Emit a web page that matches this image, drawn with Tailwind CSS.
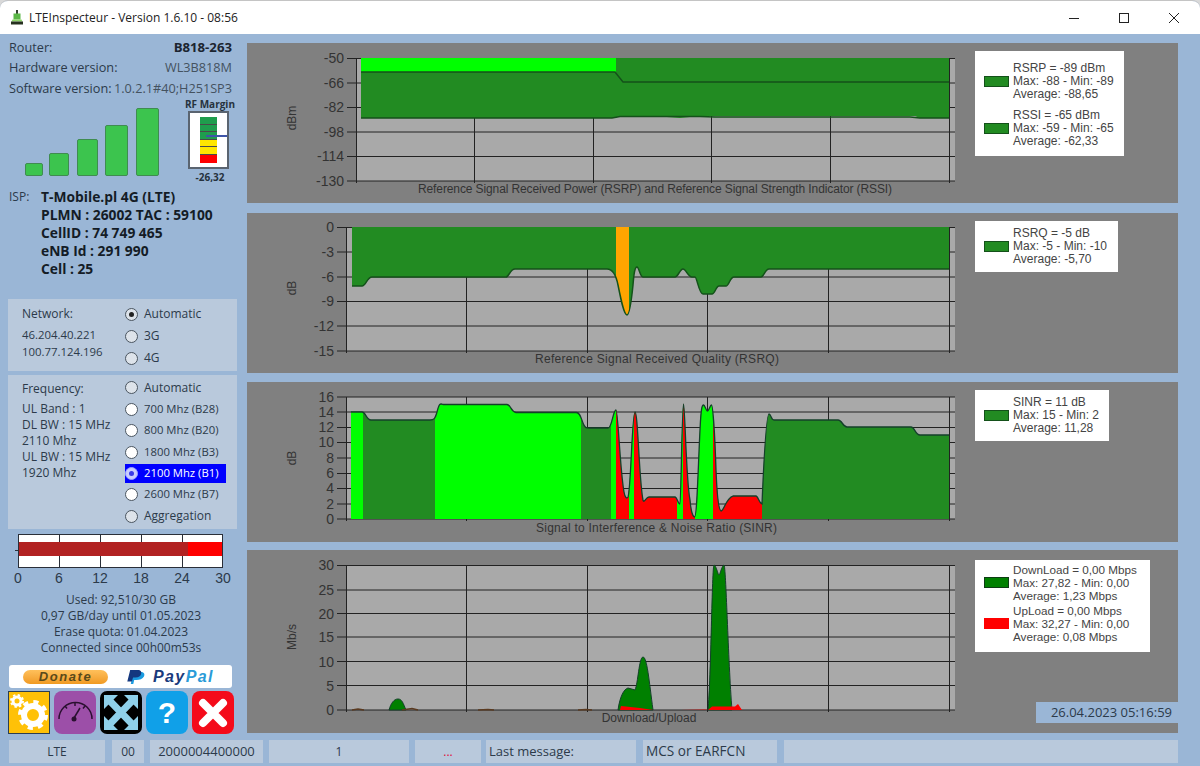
<!DOCTYPE html>
<html lang="en">
<head>
    <meta charset="UTF-8">
    <title>LTEInspecteur</title>
    <script src="https://cdn.jsdelivr.net/npm/@tailwindcss/browser@4"></script>
</head>
<body class="bg-[#d9d9d9] overflow-hidden font-['Open_Sans',sans-serif]">
<div class="w-[1200px] h-[766px] flex flex-col bg-[#9ab6d6] rounded-t-lg overflow-hidden border-t border-[#c4c4c4] text-[#2c3a4a]">

    <!-- Title bar -->
    <div class="h-[33px] shrink-0 bg-white flex items-center text-[12px] text-[#222]">
        <svg class="ml-[10px] w-[14px] h-[15px]" viewBox="0 0 14 15">
            <rect x="6" y="0" width="2" height="5" fill="#33402f"/>
            <path d="M3.500 3.500h7v6h-7z" fill="#5cb848"/>
            <path d="M2.500 9.500h9l1 2h-11z" fill="#8fd46a"/>
            <rect x="1" y="11.500" width="12" height="3" fill="#26301f"/>
        </svg>
        <span class="ml-[5px]">LTEInspecteur - Version 1.6.10 - 08:56</span>
        <div class="ml-auto flex items-center">
            <svg class="w-[50px] h-[20px]" viewBox="0 0 50 20"><path d="M20 10.500h10" stroke="#222"/></svg>
            <svg class="w-[50px] h-[20px]" viewBox="0 0 50 20"><rect x="20.500" y="5.500" width="9" height="9" fill="none" stroke="#222" stroke-width="1"/></svg>
            <svg class="w-[50px] h-[20px]" viewBox="0 0 50 20"><path d="M20 5l10 10M30 5l-10 10" stroke="#222"/></svg>
            <div class="w-[1px]"></div>
        </div>
    </div>

    <div class="flex flex-1 min-h-0">
        <!-- Left column -->
        <div class="w-[247px] shrink-0 flex flex-col text-[12px]">
            <div class="pt-[3px] pl-[9px] pr-[15px] text-[12.7px] whitespace-nowrap">
                <div class="flex justify-between h-[20px] leading-[20px]"><span>Router:</span><span class="font-bold text-[13.2px] text-[#1c2530]">B818-263</span></div>
                <div class="flex justify-between h-[21px] leading-[20px]"><span>Hardware version:</span><span class="text-[#44525f]">WL3B818M</span></div>
                <div class="flex justify-between h-[20px] leading-[20px]"><span>Software version:</span><span class="text-[#44525f]">1.0.2.1#40;H251SP3</span></div>
            </div>
            <!-- Signal + RF margin -->
            <div class="h-[89px] flex items-start">
                <div class="h-[78px] flex items-end ml-[25px] w-[134px] shrink-0">
                    <div class="w-[18px] h-[13px] bg-[#3cc44e] border border-[#3f8c50] rounded-[2px]"></div>
                    <div class="w-[20px] h-[23px] ml-[6px] bg-[#3cc44e] border border-[#3f8c50] rounded-[2px]"></div>
                    <div class="w-[21px] h-[37px] ml-[8px] bg-[#3cc44e] border border-[#3f8c50] rounded-[2px]"></div>
                    <div class="w-[23px] h-[51px] ml-[7px] bg-[#3cc44e] border border-[#3f8c50] rounded-[2px]"></div>
                    <div class="w-[23px] h-[68px] ml-[8px] bg-[#3cc44e] border border-[#3f8c50] rounded-[2px]"></div>
                </div>
                <div class="ml-[21px] w-[60px] flex flex-col items-center font-bold text-[10px] leading-[12px] text-[#26323e]">
                    <span class="whitespace-nowrap">RF Margin</span>
                    <div class="relative mt-[1px] -ml-[3px] w-[41px] h-[58px] bg-white border-2 border-[#5a6470] pt-[4px] pl-[10px]">
                        <div class="w-[17px] h-[46px] bg-[#4a4a4a] flex flex-col gap-px">
                            <div class="h-[7px] bg-[#1f9d4d]"></div>
                            <div class="h-[6px] bg-[#1f9d4d]"></div>
                            <div class="h-[7px] bg-[#1f9d4d]"></div>
                            <div class="h-[6px] bg-[#ffe600]"></div>
                            <div class="h-[7px] bg-[#ffe600]"></div>
                            <div class="h-[8px] bg-[#ff0000]"></div>
                        </div>
                        <div class="absolute left-[16px] top-[22px] w-[21px] h-[2px] bg-[#3f55a8]"></div>
                    </div>
                    <span class="mt-[2px]">-26,32</span>
                </div>
            </div>
            <!-- ISP -->
            <div class="flex h-[90px] pt-[1px]">
                <span class="pl-[9px] w-[41px] shrink-0 leading-[18px]">ISP:</span>
                <div class="font-bold text-[13.8px] leading-[18px] text-[#141c26] whitespace-nowrap">
                    <div>T-Mobile.pl 4G (LTE)</div>
                    <div>PLMN : 26002 TAC : 59100</div>
                    <div>CellID : 74 749 465</div>
                    <div>eNB Id : 291 990</div>
                    <div>Cell : 25</div>
                </div>
            </div>
            <!-- Network -->
            <div class="mt-[22px] ml-[8px] w-[229px] h-[72px] shrink-0 bg-[#b9c9dc] flex">
                <div class="w-[117px] shrink-0 pl-[14px] pt-[7px]">
                    <div class="h-[16px] leading-[16px]">Network:</div>
                    <div class="mt-[4px] text-[11.4px] leading-[17px]">46.204.40.221<br>100.77.124.196</div>
                </div>
                <div class="pt-[4px]">
                    <div class="h-[22px] flex items-center"><span class="w-[13px] h-[13px] rounded-full border border-[#4a5560] bg-[#dde3ea] flex items-center justify-center"><span class="w-[5px] h-[5px] rounded-full bg-[#222]"></span></span><span class="ml-[6px]">Automatic</span></div>
                    <div class="h-[22px] flex items-center"><span class="w-[13px] h-[13px] rounded-full border border-[#4a5560] bg-[#dde3ea]"></span><span class="ml-[6px]">3G</span></div>
                    <div class="h-[22px] flex items-center"><span class="w-[13px] h-[13px] rounded-full border border-[#4a5560] bg-[#dde3ea]"></span><span class="ml-[6px]">4G</span></div>
                </div>
            </div>
            <!-- Frequency -->
            <div class="mt-[4px] ml-[8px] w-[229px] h-[154px] shrink-0 bg-[#b9c9dc] flex">
                <div class="w-[117px] shrink-0 pl-[14px] pt-[6px]">
                    <div class="h-[16px] leading-[16px]">Frequency:</div>
                    <div class="mt-[4px] leading-[16px] whitespace-nowrap">UL Band : 1<br>DL BW : 15 MHz<br>2110 Mhz<br>UL BW : 15 MHz<br>1920 Mhz</div>
                </div>
                <div class="pt-[2px] whitespace-nowrap">
                    <div class="h-[21px] flex items-center"><span class="w-[13px] h-[13px] rounded-full border border-[#4a5560] bg-[#dde3ea]"></span><span class="ml-[6px]">Automatic</span></div>
                    <div class="h-[22px] flex items-center"><span class="w-[13px] h-[13px] rounded-full border border-[#4a5560] bg-white"></span><span class="ml-[6px] text-[11.3px]">700 Mhz (B28)</span></div>
                    <div class="h-[21px] flex items-center"><span class="w-[13px] h-[13px] rounded-full border border-[#4a5560] bg-white"></span><span class="ml-[6px] text-[11.3px]">800 Mhz (B20)</span></div>
                    <div class="h-[22px] flex items-center"><span class="w-[13px] h-[13px] rounded-full border border-[#4a5560] bg-white"></span><span class="ml-[6px] text-[11.3px]">1800 Mhz (B3)</span></div>
                    <div class="h-[19px] my-[1px] flex items-center bg-[#0000ff] text-white w-[101px]"><span class="w-[13px] h-[13px] rounded-full border border-[#9aa0ff] bg-[#c8ccff] flex items-center justify-center"><span class="w-[5px] h-[5px] rounded-full bg-[#3a3ae8]"></span></span><span class="ml-[6px] text-[11.3px]">2100 Mhz (B1)</span></div>
                    <div class="h-[21px] flex items-center"><span class="w-[13px] h-[13px] rounded-full border border-[#4a5560] bg-white"></span><span class="ml-[6px] text-[11.3px]">2600 Mhz (B7)</span></div>
                    <div class="h-[22px] flex items-center"><span class="w-[13px] h-[13px] rounded-full border border-[#4a5560] bg-[#dde3ea]"></span><span class="ml-[6px]">Aggregation</span></div>
                </div>
            </div>
            <!-- Quota bar -->
            <svg class="mt-[5px] ml-[15px] w-[211px] h-[36px] shrink-0" viewBox="15 533 211 36">
                <rect x="18.500" y="533.500" width="204" height="33" fill="#fff" stroke="#2a2f38"/>
                <rect x="19" y="541" width="169" height="14" fill="#b22222"/>
                <rect x="188" y="541" width="34" height="14" fill="#ff0000"/>
                <path d="M59.500 534v7M100.500 534v7M141.500 534v7M182.500 534v7M59.500 555v12M100.500 555v12M141.500 555v12M182.500 555v12M15 549.500h3" stroke="#2a2f38"/>
            </svg>
            <div class="ml-[13px] w-[215px] flex justify-between font-['Liberation_Sans',sans-serif] text-[14px] leading-[16px] h-[16px]">
                <span class="w-[10px] flex justify-center">0</span><span class="w-[10px] flex justify-center">6</span><span class="w-[10px] flex justify-center">12</span><span class="w-[10px] flex justify-center">18</span><span class="w-[10px] flex justify-center">24</span><span class="w-[10px] flex justify-center">30</span>
            </div>
            <div class="mt-[6px] w-[242px] text-center leading-[16px] whitespace-nowrap">
                <div>Used: 92,510/30 GB</div>
                <div>0,97 GB/day until 01.05.2023</div>
                <div>Erase quota: 01.04.2023</div>
                <div>Connected since 00h00m53s</div>
            </div>
            <!-- Donate -->
            <div class="mt-[9px] ml-[9px] w-[223px] h-[23px] shrink-0 bg-white rounded-[3px] flex items-center">
                <div class="ml-[14px] w-[85px] h-[14px] rounded-full bg-gradient-to-b from-[#ffc05a] to-[#f09a20] flex items-center justify-center font-['Liberation_Sans',sans-serif] italic font-bold text-[13px] tracking-[1.6px] text-[#5a4a1a]">Donate</div>
                <svg class="ml-[17px] w-[23px] h-[16px]" viewBox="0 0 20 16" preserveAspectRatio="none">
                    <path d="M5 15L7.500 3h6c3 0 4 2 3 4.500S12.500 11 10 11H8l-.8 4z" fill="#1a9be0"/>
                    <path d="M2 12.500L4.500 1h6.500c3 0 3.500 2 3 4S12 8.500 9 8.500H7L6 12.500z" fill="#14387f"/>
                </svg>
                <span class="ml-[5px] font-['Liberation_Sans',sans-serif] italic font-bold text-[16px] tracking-[1.4px] text-[#1a3a7c]">Pay<span class="text-[#2a9bd8]">Pal</span></span>
            </div>
            <!-- Tool buttons -->
            <div class="mt-[3px] ml-[8px] flex gap-[4px]">
                <svg class="w-[42px] h-[43px]" viewBox="0 0 42 43">
                    <rect x=".5" y=".5" width="41" height="42" fill="#ffc107" stroke="#2c3e50"/>
                    <circle cx="25" cy="24" r="9" fill="none" stroke="#fff" stroke-width="6"/>
                    <circle cx="25" cy="24" r="13" fill="none" stroke="#fff" stroke-width="4" stroke-dasharray="5.100 5.100"/>
                    <circle cx="9" cy="10" r="4" fill="none" stroke="#fff" stroke-width="3"/>
                    <circle cx="9" cy="10" r="6" fill="none" stroke="#fff" stroke-width="2" stroke-dasharray="2.360 2.350"/>
                </svg>
                <svg class="w-[42px] h-[43px]" viewBox="0 0 42 43">
                    <rect width="42" height="43" rx="8" fill="#9c4fa8"/>
                    <path d="M5 28A16.500 16.500 0 0 1 38 28" fill="none" stroke="#2a1030" stroke-width="1.500"/>
                    <path d="M21 12v3M11 15l2 2.500M31 15l-2 2.500" stroke="#2a1030" stroke-width="1.500"/>
                    <path d="M20 27l6-10" stroke="#2a1030" stroke-width="1.500"/>
                    <circle cx="20" cy="28" r="2.500" fill="#2a1030"/>
                </svg>
                <svg class="w-[42px] h-[43px]" viewBox="0 0 42 43">
                    <rect width="42" height="43" rx="7" fill="#000"/>
                    <path d="M4 4h14L4 18zM38 4H24l14 14zM4 39h14L4 25zM38 39H24l14-14z" fill="#8fd0ea"/>
                    <path d="M9 9l24 25M33 9L9 34" stroke="#8fd0ea" stroke-width="7"/>
                </svg>
                <div class="w-[42px] h-[43px] rounded-[8px] bg-[#10a0e8] flex items-center justify-center text-white font-bold text-[30px] font-['Liberation_Sans',sans-serif]">?</div>
                <svg class="w-[42px] h-[43px]" viewBox="0 0 42 43">
                    <rect width="42" height="43" rx="8" fill="#f40b1a"/>
                    <path d="M11 12l20 20M31 12L11 32" stroke="#fff" stroke-width="8" stroke-linecap="round"/>
                </svg>
            </div>
        </div>

        <!-- Chart column -->
        <div class="w-[931px] shrink-0 pt-[9px] flex flex-col font-['Liberation_Sans',sans-serif] text-[#444]">

            <!-- RSRP / RSSI -->
            <div class="h-[160px] bg-[#808080] flex items-start shrink-0">
                <svg class="w-[708px] h-[160px] shrink-0 fill-[#333]" viewBox="247 43 708 160" font-size="14">
                    <rect x="356" y="58" width="599" height="123" fill="#a9a9a9"/>
                    <path d="M347 58.500h608M347 83h608M347 107.500h608M347 132h608M347 156.500h608M347 181h608" stroke="#222" fill="none"/>
                    <path d="M356.500 58v125M474.500 58v125M593.500 58v125M711.500 58v125M830.500 58v125M949.500 58v125" stroke="#222" fill="none"/>
                    <path d="M361 58H949V118L920 118 915 116 700 116 690 117 680 118 660 116.500 630 116 620 116.500 612 118 361 118z" fill="#228b22"/>
                    <rect x="361" y="58" width="255" height="14" fill="#00ff00"/>
                    <path d="M361 72H615L623 82H949" stroke="#14511a" stroke-width="1.500" fill="none"/>
                    <path d="M361 118H612L620 116.500H700L715 117H910L920 118H949" stroke="#14511a" stroke-width="1.500" fill="none"/>
                    <g text-anchor="end"><text x="344" y="63">-50</text><text x="344" y="88">-66</text><text x="344" y="112">-82</text><text x="344" y="137">-98</text><text x="344" y="161">-114</text><text x="344" y="186">-130</text></g>
                    <text transform="translate(296 118) rotate(-90)" text-anchor="middle" font-size="12">dBm</text>
                    <text x="418" y="193" font-size="12" textLength="474" lengthAdjust="spacing">Reference Signal Received Power (RSRP) and Reference Signal Strength Indicator (RSSI)</text>
                </svg>
                <div class="ml-[20px] mt-[8px] w-[149px] h-[105px] bg-white pl-[9px] pt-[11px] text-[12px] leading-[13px] flex flex-col gap-[8px]">
                    <div class="flex items-center"><span class="w-[25px] h-[11px] bg-[#228b22] border border-[#14511a]"></span><div class="ml-[4px] whitespace-nowrap">RSRP = -89 dBm<br>Max: -88 - Min: -89<br>Average: -88,65</div></div>
                    <div class="flex items-center"><span class="w-[25px] h-[11px] bg-[#228b22] border border-[#14511a]"></span><div class="ml-[4px] whitespace-nowrap">RSSI = -65 dBm<br>Max: -59 - Min: -65<br>Average: -62,33</div></div>
                </div>
            </div>

            <!-- RSRQ -->
            <div class="mt-[10px] h-[160px] bg-[#808080] flex items-start shrink-0">
                <svg class="w-[708px] h-[160px] shrink-0 fill-[#333]" viewBox="247 213 708 160" font-size="14">
                    <rect x="346" y="227" width="609" height="124" fill="#a9a9a9"/>
                    <path d="M337 227.500h618M337 252h618M337 277h618M337 301.500h618M337 326h618M337 351h618" stroke="#222" fill="none"/>
                    <path d="M346.500 227v126M466.500 227v126M587.500 227v126M707.500 227v126M828.500 227v126M949.500 227v126" stroke="#222" fill="none"/>
                    <clipPath id="rsrq"><path d="M352 227V286H362C366 286 367 277 372 277H506C509 277 510 269 515 269H607C613 269 616 275 618 285 621 300 624 315 627 315 630 315 632 295 633 285 634 272 635 267 637 267 639 267 640 277 643 277H675C678 277 680 269 683 269 686 269 688 277 692 277H695C697 277 699 294 703 294H712C715 294 716 286 719 286H726C729 286 730 277 734 277H761C764 277 765 269 769 269H949V227z"/></clipPath>
                    <g clip-path="url(#rsrq)">
                        <rect x="352" y="227" width="597" height="90" fill="#228b22"/>
                        <rect x="616" y="227" width="13" height="90" fill="#ffa500"/>
                    </g>
                    <path d="M352 286H362C366 286 367 277 372 277H506C509 277 510 269 515 269H607C613 269 616 275 618 285 621 300 624 315 627 315 630 315 632 295 633 285 634 272 635 267 637 267 639 267 640 277 643 277H675C678 277 680 269 683 269 686 269 688 277 692 277H695C697 277 699 294 703 294H712C715 294 716 286 719 286H726C729 286 730 277 734 277H761C764 277 765 269 769 269H949" stroke="#14511a" stroke-width="1.500" fill="none"/>
                    <g text-anchor="end"><text x="334" y="232">0</text><text x="334" y="257">-3</text><text x="334" y="282">-6</text><text x="334" y="306">-9</text><text x="334" y="331">-12</text><text x="334" y="356">-15</text></g>
                    <text transform="translate(296 288) rotate(-90)" text-anchor="middle" font-size="12">dB</text>
                    <text x="535" y="363" font-size="12" textLength="244" lengthAdjust="spacing">Reference Signal Received Quality (RSRQ)</text>
                </svg>
                <div class="ml-[20px] mt-[8px] w-[143px] h-[51px] bg-white pl-[9px] pt-[6px] text-[12px] leading-[13px]">
                    <div class="flex items-center"><span class="w-[25px] h-[11px] bg-[#228b22] border border-[#14511a]"></span><div class="ml-[4px] whitespace-nowrap">RSRQ = -5 dB<br>Max: -5 - Min: -10<br>Average: -5,70</div></div>
                </div>
            </div>

            <!-- SINR -->
            <div class="mt-[9px] h-[160px] bg-[#808080] flex items-start shrink-0">
                <svg class="w-[708px] h-[160px] shrink-0 fill-[#333]" viewBox="247 382 708 160" font-size="14">
                    <rect x="346" y="397" width="609" height="122" fill="#a9a9a9"/>
                    <path d="M337 397h618M337 412h618M337 427.500h618M337 442.500h618M337 458h618M337 473.500h618M337 488.500h618M337 504h618M337 519h618" stroke="#222" fill="none"/>
                    <path d="M466.500 397v124M587.500 397v124M707.500 397v124M828.500 397v124M949.500 397v124M346.500 397v124" stroke="#222" fill="none"/>
                    <clipPath id="sinr"><path d="M351 519V412H362C366 412 366 420 371 420H430C434 420 435 419 437 412 439 404 440 403 443 404.500H507C511 405 511 412 516 412.500H576C580 412 581 418 583 423 585 428 586 428 589 428H608C612 428 613 410 616 410 618 410 620 470 624 492 625 498 627 499 628 497 631 490 632 412 635 412 638 412 639 480 643 500 644 504 646 497 649 497H675C677 497 678 504 680 504 681 504 682 404 683.500 404 685 404 686 480 690 500 691 512 693 517 694.500 517 697 517 698 470 700 430 701 408 702 405 703.500 405 705 405 706 411 707.500 411 709 411 710 405 711.500 405 713 405 715 440 716 470 717 495 719 510 721 511 724 511 726 498 733 496H756C758 496 759 503 762 504 763 480 766 414 769 414 771 414 771 420 774 420H838C842 420 843 427 847 427H911C915 427 915 435 920 435H949V519z"/></clipPath>
                    <g clip-path="url(#sinr)">
                        <rect x="351" y="397" width="598" height="122" fill="#228b22"/>
                        <rect x="351" y="397" width="12" height="122" fill="#00ff00"/>
                        <rect x="435" y="397" width="146" height="122" fill="#00ff00"/>
                        <rect x="611" y="397" width="5" height="122" fill="#00ff00"/>
                        <rect x="616" y="397" width="13" height="122" fill="#ff0000"/>
                        <rect x="629" y="397" width="5" height="122" fill="#00ff00"/>
                        <rect x="634" y="397" width="43" height="122" fill="#ff0000"/>
                        <rect x="677" y="397" width="6" height="122" fill="#00ff00"/>
                        <rect x="683" y="397" width="12" height="122" fill="#ff0000"/>
                        <rect x="695" y="397" width="18" height="122" fill="#00ff00"/>
                        <rect x="713" y="397" width="49" height="122" fill="#ff0000"/>
                    </g>
                    <path d="M351 412H362C366 412 366 420 371 420H430C434 420 435 419 437 412 439 404 440 403 443 404.500H507C511 405 511 412 516 412.500H576C580 412 581 418 583 423 585 428 586 428 589 428H608C612 428 613 410 616 410 618 410 620 470 624 492 625 498 627 499 628 497 631 490 632 412 635 412 638 412 639 480 643 500 644 504 646 497 649 497H675C677 497 678 504 680 504 681 504 682 404 683.500 404 685 404 686 480 690 500 691 512 693 517 694.500 517 697 517 698 470 700 430 701 408 702 405 703.500 405 705 405 706 411 707.500 411 709 411 710 405 711.500 405 713 405 715 440 716 470 717 495 719 510 721 511 724 511 726 498 733 496H756C758 496 759 503 762 504 763 480 766 414 769 414 771 414 771 420 774 420H838C842 420 843 427 847 427H911C915 427 915 435 920 435H949" stroke="#14402a" stroke-width="1.300" fill="none"/>
                    <g text-anchor="end"><text x="334" y="402">16</text><text x="334" y="417">14</text><text x="334" y="432">12</text><text x="334" y="447">10</text><text x="334" y="463">8</text><text x="334" y="478">6</text><text x="334" y="493">4</text><text x="334" y="509">2</text><text x="334" y="524">0</text></g>
                    <text transform="translate(296 458) rotate(-90)" text-anchor="middle" font-size="12">dB</text>
                    <text x="536" y="532" font-size="12" textLength="241" lengthAdjust="spacing">Signal to Interference &amp; Noise Ratio (SINR)</text>
                </svg>
                <div class="ml-[20px] mt-[8px] w-[134px] h-[51px] bg-white pl-[9px] pt-[6px] text-[12px] leading-[13px]">
                    <div class="flex items-center"><span class="w-[25px] h-[11px] bg-[#228b22] border border-[#14511a]"></span><div class="ml-[4px] whitespace-nowrap">SINR = 11 dB<br>Max: 15 - Min: 2<br>Average: 11,28</div></div>
                </div>
            </div>

            <!-- Download / Upload -->
            <div class="relative mt-[8px] h-[183px] bg-[#808080] flex items-start shrink-0">
                <svg class="w-[708px] h-[183px] shrink-0 fill-[#333]" viewBox="247 550 708 183" font-size="14">
                    <rect x="346" y="565" width="609" height="145" fill="#a9a9a9"/>
                    <path d="M337 565.500h618M337 590h618M337 613.500h618M337 637h618M337 661.500h618M337 685.500h618M337 710h618" stroke="#222" fill="none"/>
                    <path d="M346.500 565v147M466.500 565v147M587.500 565v147M707.500 565v147M828.500 565v147M949.500 565v147" stroke="#222" fill="none"/>
                    <path d="M389 710C391 703 394 699 398 699S403 703 406 710z" fill="#008000" stroke="#14402a"/>
                    <path d="M618 710C620 696 624 689 628 688L635 690C638 684 639 657 643 657S649 680 653 710z" fill="#008000" stroke="#14402a"/>
                    <path d="M708 710C711 680 712 565 714 565S718 575 719 575 722 565 724 565 728 660 732 710z" fill="#008000" stroke="#14402a"/>
                    <path d="M620 710L621 706 640 708 653 710zM708 710L712 706.500 735 706.500 738 704 742 710zM680 709.500L705 709.500 708 710z" fill="#ff0000"/>
                    <path d="M352 710L358 709 364 710M402 710L412 708.500 418 710M478 710L488 709.500 494 710M578 710L586 709.500 592 710" stroke="#5a3a20" fill="none" stroke-width="1.500"/>
                    <g text-anchor="end"><text x="334" y="570">30</text><text x="334" y="595">25</text><text x="334" y="619">20</text><text x="334" y="642">15</text><text x="334" y="667">10</text><text x="334" y="691">5</text><text x="334" y="715">0</text></g>
                    <text transform="translate(296 637) rotate(-90)" text-anchor="middle" font-size="12">Mb/s</text>
                    <text x="649" y="722" text-anchor="middle" font-size="12">Download/Upload</text>
                </svg>
                <div class="ml-[20px] mt-[10px] w-[175px] h-[92px] bg-white pl-[9px] pt-[3px] text-[11.7px] leading-[13px] flex flex-col gap-[2px]">
                    <div class="flex items-center"><span class="w-[25px] h-[11px] bg-[#008000] border border-[#0d3d14]"></span><div class="ml-[4px] whitespace-nowrap">DownLoad = 0,00 Mbps<br>Max: 27,82 - Min: 0,00<br>Average: 1,23 Mbps</div></div>
                    <div class="flex items-center"><span class="w-[25px] h-[11px] bg-[#ff0000]"></span><div class="ml-[4px] whitespace-nowrap">UpLoad = 0,00 Mbps<br>Max: 32,27 - Min: 0,00<br>Average: 0,08 Mbps</div></div>
                </div>
                <div class="absolute right-0 bottom-[10px] w-[142px] h-[21px] bg-[#9ab6d6] text-right pr-[6px] font-['Open_Sans',sans-serif] text-[13px] leading-[21px] text-[#2c3a4a] whitespace-nowrap">26.04.2023 05:16:59</div>
            </div>
        </div>
    </div>

    <!-- Status bar -->
    <div class="h-[23px] shrink-0 mb-[3px] ml-[9px] flex text-[13px] text-[#2c3a4a] whitespace-nowrap">
        <div class="w-[96px] bg-[#b9c9dc] flex items-center justify-center text-[12px]">LTE</div>
        <div class="w-[32px] ml-[7px] bg-[#b9c9dc] flex items-center justify-center text-[12px]">00</div>
        <div class="w-[113px] ml-[6px] bg-[#b9c9dc] flex items-center justify-center">2000004400000</div>
        <div class="w-[140px] ml-[6px] bg-[#b9c9dc] flex items-center justify-center text-[12px]">1</div>
        <div class="w-[66px] ml-[6px] bg-[#b9c9dc] flex items-center justify-center text-[#e0103a] text-[12px]">...</div>
        <div class="w-[150px] ml-[5px] bg-[#b9c9dc] flex items-center pl-[3px]">Last message:</div>
        <div class="w-[134px] ml-[7px] bg-[#b9c9dc] flex items-center pl-[3px] text-[13.6px]">MCS or EARFCN</div>
        <div class="w-[394px] ml-[7px] bg-[#b9c9dc]"></div>
    </div>
</div>
</body>
</html>
